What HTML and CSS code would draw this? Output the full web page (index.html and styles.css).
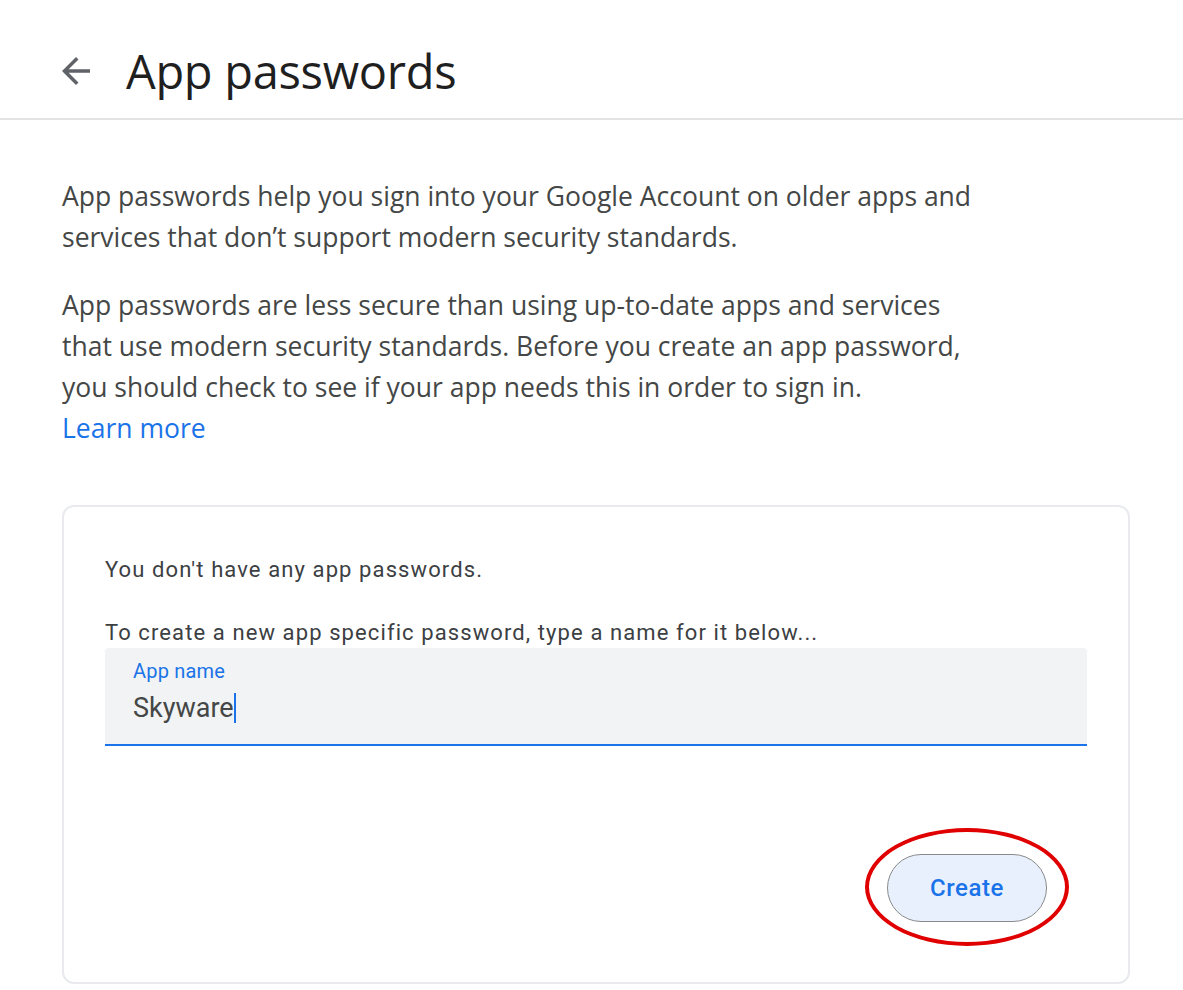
FILE: index.html
```html
<!DOCTYPE html>
<html lang="en">
<head>
    <meta charset="UTF-8">
    <title>App passwords</title>
    <link rel="stylesheet" href="styles.css">
</head>
<body>
    <header class="cabecalho">
        <a class="voltar" href="#">
            <svg width="42" height="42" viewBox="0 0 24 24"><path d="M20 11H7.83l5.59-5.59L12 4l-8 8 8 8 1.41-1.41L7.83 13H20v-2z" fill="#5f6368"/></svg>
        </a>
        <h1>App passwords</h1>
    </header>

    <main class="conteudo">
        <p class="texto">App passwords help you sign into your Google Account on older apps and services that don’t support modern security standards.</p>
        <p class="texto">App passwords are less secure than using up-to-date apps and services that use modern security standards. Before you create an app password, you should check to see if your app needs this in order to sign in.<br><a class="link" href="#">Learn more</a></p>

        <div class="cartao">
            <p class="aviso">You don't have any app passwords.</p>
            <p class="instrucao">To create a new app specific password, type a name for it below...</p>
            <div class="campo">
                <label class="rotulo" for="nome">App name</label>
                <div class="valor">Skyware<span class="cursor"></span></div>
            </div>
            <div class="acoes">
                <div class="destaque">
                    <button class="botao-criar">Create</button>
                    <span class="circulo"></span>
                </div>
            </div>
        </div>
    </main>
</body>
</html>
```

FILE: styles.css
```css
body {
    margin: 0;
    background-color: #ffffff;
    font-family: "Open Sans", Roboto, Arial, sans-serif;
    color: #3c4043;
}

.cabecalho {
    display: flex;
    align-items: center;
    height: 120px;
    box-sizing: border-box;
    padding: 24px 0 0 55px;
    border-bottom: 2px solid #e3e3e3;
}

.voltar {
    display: flex;
    width: 42px;
    height: 42px;
    margin-right: 29px;
}

.cabecalho h1 {
    margin: 0;
    font-weight: 400;
    font-size: 47px;
    color: #1f1f1f;
    letter-spacing: -0.3px;
}

.conteudo {
    padding: 56px 53px 0 62px;
}

.texto {
    margin: 0 0 27px;
    max-width: 930px;
    font-size: 26.5px;
    line-height: 41px;
    color: #444746;
}

.link {
    color: #1a73e8;
    text-decoration: none;
}

.cartao {
    margin-top: 56px;
    border: 2px solid #e8eaed;
    border-radius: 12px;
    padding: 48px 41px 60px 41px;
}

.aviso,
.instrucao {
    margin: 0;
    font-family: Roboto, Arial, sans-serif;
    font-size: 22px;
    letter-spacing: 1.1px;
    line-height: 30px;
    color: #3c4043;
}

.aviso {
    margin-bottom: 33px;
}

.campo {
    background-color: #f1f3f4;
    border-radius: 4px 4px 0 0;
    border-bottom: 2px solid #1a73e8;
    padding: 12px 28px 14px;
    height: 70px;
    font-family: Roboto, Arial, sans-serif;
}

.rotulo {
    display: block;
    font-size: 20px;
    letter-spacing: 0.2px;
    line-height: 22px;
    color: #1a73e8;
}

.valor {
    margin-top: 10px;
    font-size: 27px;
    line-height: 32px;
    color: #444746;
}

.cursor {
    display: inline-block;
    width: 2px;
    height: 30px;
    background-color: #1a73e8;
    vertical-align: -6px;
}

.acoes {
    display: flex;
    justify-content: flex-end;
    padding: 108px 40px 0 0;
}

.destaque {
    position: relative;
}

.botao-criar {
    width: 160px;
    height: 68px;
    border: 1.5px solid #8a8a8a;
    border-radius: 34px;
    background-color: #e8f0fe;
    color: #1a73e8;
    font-family: Roboto, Arial, sans-serif;
    font-weight: 500;
    font-size: 24px;
    letter-spacing: 0.6px;
}

.circulo {
    position: absolute;
    left: -22px;
    top: -26px;
    width: 196px;
    height: 110px;
    border: 4px solid #e00000;
    border-radius: 50%;
}
```
